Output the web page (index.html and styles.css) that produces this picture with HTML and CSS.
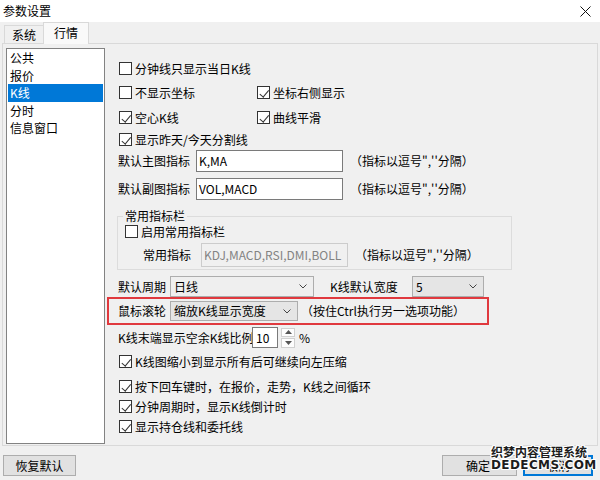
FILE: index.html
```html
<!DOCTYPE html>
<html lang="zh-CN">
<head>
<meta charset="utf-8">
<title>参数设置</title>
<link rel="stylesheet" href="styles.css">
</head>
<body>
<div class="titlebar">
  <span class="title">参数设置</span>
  <svg class="close" width="11" height="11" viewBox="0 0 11 11"><path d="M0.5 0.5L10.5 10.5M10.5 0.5L0.5 10.5" stroke="#111" stroke-width="1"/></svg>
</div>
<div class="tabs">
  <div class="tab">系统</div>
  <div class="tab active">行情</div>
</div>
<div class="panel">
  <ul class="list">
    <li>公共</li>
    <li>报价</li>
    <li class="sel">K线</li>
    <li>分时</li>
    <li>信息窗口</li>
  </ul>
  <div class="content">
    <div class="crow m1"><span class="cb"></span>分钟线只显示当日K线</div>
    <div class="pair m2">
      <div class="crow"><span class="cb"></span>不显示坐标</div>
      <div class="crow"><span class="cb on"></span>坐标右侧显示</div>
    </div>
    <div class="pair m3">
      <div class="crow"><span class="cb on"></span>空心K线</div>
      <div class="crow"><span class="cb on"></span>曲线平滑</div>
    </div>
    <div class="crow m4"><span class="cb on"></span>显示昨天/今天分割线</div>
    <div class="irow m5"><span class="lbl">默认主图指标</span><span class="input">K,MA</span><span class="hint">（指标以逗号",''分隔）</span></div>
    <div class="irow m6"><span class="lbl">默认副图指标</span><span class="input">VOL,MACD</span><span class="hint">（指标以逗号",''分隔）</span></div>
    <fieldset class="group">
      <legend>常用指标栏</legend>
      <div class="crow g1"><span class="cb"></span>启用常用指标栏</div>
      <div class="irow g2"><span class="lbl">常用指标</span><span class="input dis">KDJ,MACD,RSI,DMI,BOLL</span><span class="hint">（指标以逗号",''分隔）</span></div>
    </fieldset>
    <div class="srow">
      <span class="lbl">默认周期</span>
      <span class="combo c1">日线<svg class="chev" width="8" height="5" viewBox="0 0 8 5"><path d="M0.5 0.5L4 4L7.5 0.5" stroke="#444" fill="none"/></svg></span>
      <span class="lbl lbl2">K线默认宽度</span>
      <span class="combo c3">5<svg class="chev" width="8" height="5" viewBox="0 0 8 5"><path d="M0.5 0.5L4 4L7.5 0.5" stroke="#444" fill="none"/></svg></span>
    </div>
    <div class="redbox">
      <span class="lbl">鼠标滚轮</span>
      <span class="combo c2">缩放K线显示宽度<svg class="chev" width="8" height="5" viewBox="0 0 8 5"><path d="M0.5 0.5L4 4L7.5 0.5" stroke="#444" fill="none"/></svg></span>
      <span class="hint h2">（按住Ctrl执行另一选项功能）</span>
    </div>
    <div class="sprow">
      <span class="lbl lbl3">K线末端显示空余K线比例</span>
      <span class="input num">10</span>
      <span class="spin">
        <span class="sbtn"><svg width="7" height="4" viewBox="0 0 7 4"><path d="M0 4L3.5 0L7 4Z" fill="#555"/></svg></span>
        <span class="sbtn"><svg width="7" height="4" viewBox="0 0 7 4"><path d="M0 0L3.5 4L7 0Z" fill="#555"/></svg></span>
      </span>
      <span class="pct">%</span>
    </div>
    <div class="crow b1"><span class="cb on"></span>K线图缩小到显示所有后可继续向左压缩</div>
    <div class="crow b2"><span class="cb on"></span>按下回车键时，在报价，走势，K线之间循环</div>
    <div class="crow b3"><span class="cb on"></span>分钟周期时，显示K线倒计时</div>
    <div class="crow b4"><span class="cb on"></span>显示持仓线和委托线</div>
  </div>
</div>
<div class="footer">
  <span class="btn reset">恢复默认</span>
  <span class="right">
    <span class="btn ok">确定</span>
    <span class="btn cancel">取消</span>
  </span>
</div>
<div class="watermark">
  <div class="wm1">织梦内容管理系统</div>
  <div class="wm2">DEDECMS.COM</div>
</div>
</body>
</html>
```
FILE: styles.css
```css
* { box-sizing: border-box; }
html, body { margin: 0; padding: 0; }
body {
  width: 600px;
  height: 480px;
  background: #f0f0f0;
  font-family: "Noto Sans CJK SC", "Microsoft YaHei", sans-serif;
  font-size: 12px;
  color: #000;
  overflow: hidden;
  position: relative;
}

.titlebar {
  height: 22px;
  background: #fff;
  display: flex;
  align-items: center;
  justify-content: space-between;
  padding: 0 9px 0 3px;
}
.title { line-height: 16px; }
.close { display: block; }

.tabs {
  height: 21px;
  display: flex;
  align-items: flex-end;
  padding-left: 4px;
  position: relative;
  z-index: 1;
}
.tab {
  height: 18px;
  width: 40px;
  border: 1px solid #d9d9d9;
  border-bottom: none;
  text-align: center;
  line-height: 17px;
  background: #f0f0f0;
}
.tab.active {
  height: 22px;
  width: 46px;
  margin-left: -1px;
  margin-bottom: -1px;
  padding-top: 1px;
  background: #f9f9f9;
}

.panel {
  height: 403px;
  margin: 0 2px;
  border: 1px solid #d9d9d9;
  display: flex;
  background: #f0f0f0;
}
.list {
  list-style: none;
  margin: 4px 0 0 3px;
  padding: 0 1px;
  width: 99px;
  height: 396px;
  border: 1px solid #828282;
  background: #fff;
}
.list li {
  line-height: 17.5px;
  height: 17.5px;
  padding-left: 2px;
}
.list li.sel { background: #0078d7; color: #fff; }

.content {
  flex: 1;
  padding-left: 13px;
}

.crow {
  display: flex;
  align-items: center;
  height: 13px;
  line-height: 13px;
  white-space: nowrap;
}
.cb {
  width: 13px;
  height: 13px;
  border: 1px solid #333;
  background: #fff;
  margin: 0 3px 0 1px;
  position: relative;
  flex: none;
}
.cb.on::after {
  content: "";
  position: absolute;
  left: 3.5px;
  top: 0.5px;
  width: 3.5px;
  height: 7.5px;
  border: solid #333;
  border-width: 0 1px 1px 0;
  transform: rotate(40deg);
}
.pair {
  display: grid;
  grid-template-columns: 138px auto;
}
.m1 { margin-top: 18px; }
.m2 { margin-top: 11px; }
.m3 { margin-top: 12px; }
.m4 { margin-top: 9px; }

.irow {
  display: flex;
  align-items: center;
  height: 22px;
  white-space: nowrap;
}
.m5 { margin-top: 4px; }
.m6 { margin-top: 6px; }
.lbl { line-height: 16px; }
.input {
  display: block;
  height: 22px;
  width: 147px;
  margin-left: 6px;
  border: 1px solid #7a7a7a;
  background: #fff;
  padding-left: 2px;
  line-height: 20px;
}
.hint { margin-left: 7px; line-height: 16px; }

.group {
  margin: 8px 0 0 -1px;
  width: 395px;
  border: 1px solid #dcdcdc;
  padding: 0 0 2px 0;
  min-width: 0;
}
.group legend {
  margin-left: 5px;
  padding: 0 2px;
  line-height: 16px;
}
.g1 { margin-top: 1px; padding-left: 6px; }
.g2 { margin-top: 5px; height: 24px; padding-left: 25px; }
.g2 .input { height: 24px; margin-left: 10px; line-height: 22px; }
.input.dis {
  background: #f0f0f0;
  border-color: #cccccc;
  color: #838383;
}
.g2 .hint { margin-left: 7px; }

.srow {
  display: flex;
  align-items: center;
  height: 21px;
  margin-top: 6px;
  white-space: nowrap;
}
.combo {
  display: flex;
  align-items: center;
  justify-content: space-between;
  height: 21px;
  border: 1px solid #adadad;
  background: #e9e9e9;
  padding: 0 6px 0 3px;
  line-height: 16px;
  margin-left: 4px;
}
.chev { display: block; }
.c1 { width: 144px; background: #efefef; }
.lbl2 { margin-left: 16px; width: 82px; }
.c3 { width: 72px; margin-left: 0; background: #e5e5e5; }

.redbox {
  display: flex;
  align-items: center;
  height: 28px;
  width: 382px;
  margin-left: -11px;
  border: 2px solid #e0393e;
  padding-left: 9px;
  white-space: nowrap;
}
.c2 { width: 128px; height: 20px; background: #e5e5e5; }
.h2 { margin-left: 3px; }

.sprow {
  display: flex;
  align-items: center;
  height: 21px;
  margin-top: 2px;
  white-space: nowrap;
}
.lbl3 { width: 134px; }
.input.num { width: 26px; height: 21px; margin-left: 0; line-height: 19px; padding-left: 3px; }
.spin {
  display: flex;
  flex-direction: column;
  gap: 1px;
  margin-left: 3px;
  width: 14px;
  height: 20px;
}
.sbtn {
  flex: 1;
  display: flex;
  align-items: center;
  justify-content: center;
  background: #fdfdfd;
  border: 1px solid #d0d0d0;
}
.sbtn svg { display: block; }
.pct { margin-left: 4px; line-height: 16px; }

.b1 { margin-top: 7px; }
.b2 { margin-top: 12px; }
.b3 { margin-top: 7px; }
.b4 { margin-top: 7px; }

.footer {
  display: flex;
  justify-content: space-between;
  padding: 9px 7px 0 3px;
}
.right { display: flex; gap: 6px; }
.btn {
  display: flex;
  align-items: center;
  justify-content: center;
  height: 21px;
  border: 1px solid #adadad;
  background: #e1e1e1;
  line-height: 16px;
}
.reset { width: 73px; }
.ok { width: 75px; justify-content: flex-start; padding-left: 23px; }
.cancel { width: 70px; border: 2px solid #0078d7; }

.watermark {
  position: absolute;
  left: 491px;
  top: 444px;
  font-weight: bold;
  color: #1c1c1c;
  text-shadow: 1px 0 0 #fff, -1px 0 0 #fff, 0 1px 0 #fff, 0 -1px 0 #fff, 1px 1px 0 #fff, -1px -1px 0 #fff, 1px -1px 0 #fff, -1px 1px 0 #fff;
}
.wm1 { font-size: 12px; line-height: 15px; }
.wm2 { font-size: 12px; line-height: 12px; letter-spacing: 0.4px; font-family: "DejaVu Sans", sans-serif; }
```
